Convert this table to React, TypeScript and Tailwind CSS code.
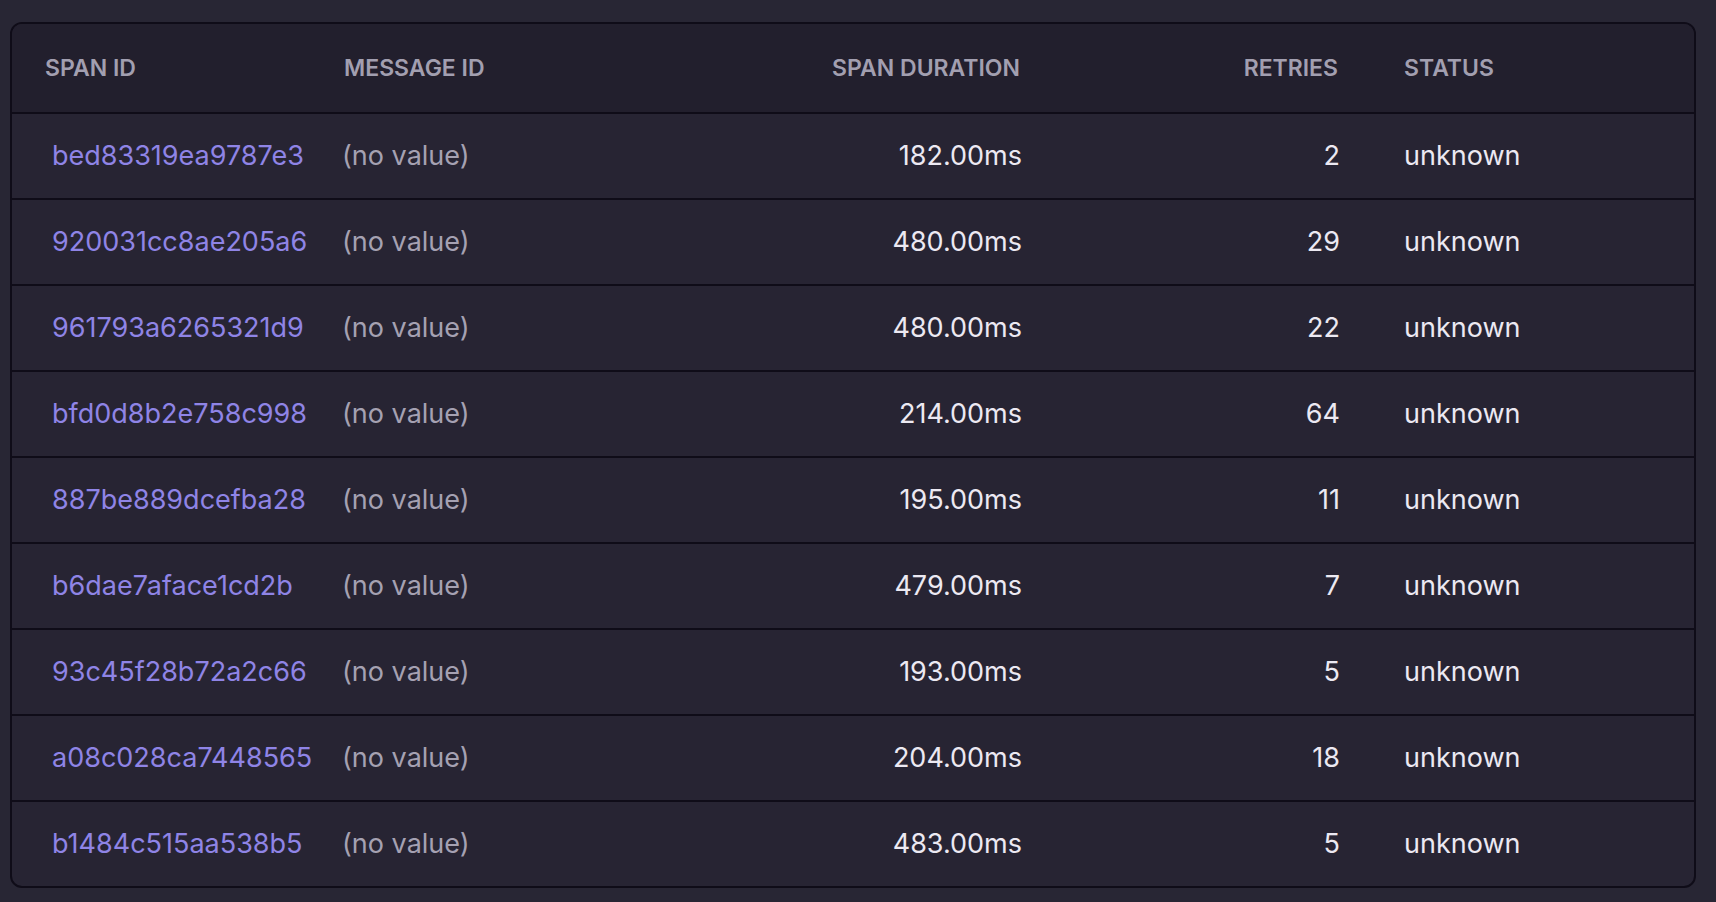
const ROWS = [
  { id: "bed83319ea9787e3", dur: "182.00ms", retries: 2 },
  { id: "920031cc8ae205a6", dur: "480.00ms", retries: 29 },
  { id: "961793a6265321d9", dur: "480.00ms", retries: 22 },
  { id: "bfd0d8b2e758c998", dur: "214.00ms", retries: 64 },
  { id: "887be889dcefba28", dur: "195.00ms", retries: 11 },
  { id: "b6dae7aface1cd2b", dur: "479.00ms", retries: 7 },
  { id: "93c45f28b72a2c66", dur: "193.00ms", retries: 5 },
  { id: "a08c028ca7448565", dur: "204.00ms", retries: 18 },
  { id: "b1484c515aa538b5", dur: "483.00ms", retries: 5 },
];

const GRID = "grid grid-cols-[299px_371px_371px_318px_1fr]";

export default function App() {
  return (
    <div
      className="min-h-[902px] w-full bg-[#282634] pt-[22px] pl-[10px]"
      style={{ fontFamily: "Inter, 'Noto Sans', sans-serif" }}
    >
      <div className="w-[1686px] overflow-hidden rounded-[12px] border-2 border-[#0f0c18] bg-[#272433]">
        {/* header */}
        <div className={`${GRID} h-[90px] items-center border-b-2 border-[#0f0c18] bg-[#221f2d] text-[23px] font-semibold uppercase text-[#a29fb0]`}>
          <div className="px-[33px]">Span ID</div>
          <div className="px-[33px]">Message ID</div>
          <div className="px-[33px] text-right">Span Duration</div>
          <div className="px-[33px] text-right">Retries</div>
          <div className="px-[33px]">Status</div>
        </div>

        {ROWS.map((r, i) => {
          const last = i === ROWS.length - 1;
          return (
            <div
              key={r.id}
              className={`${GRID} items-center text-[27px] ${
                last ? "h-[84px]" : "h-[86px] border-b-2 border-[#0f0c18]"
              }`}
            >
              <div className="pl-[40px] pr-[10px]">
                <a className="cursor-pointer text-[#8f84e6]">{r.id}</a>
              </div>
              <div className="px-[31px] text-[#a5a1b2]">(no value)</div>
              <div className="pl-[33px] pr-[31px] text-right text-[#ece9f2]">{r.dur}</div>
              <div className="pl-[33px] pr-[31px] text-right text-[#ece9f2]">{r.retries}</div>
              <div className="px-[33px] text-[#ece9f2]">unknown</div>
            </div>
          );
        })}
      </div>
    </div>
  );
}
